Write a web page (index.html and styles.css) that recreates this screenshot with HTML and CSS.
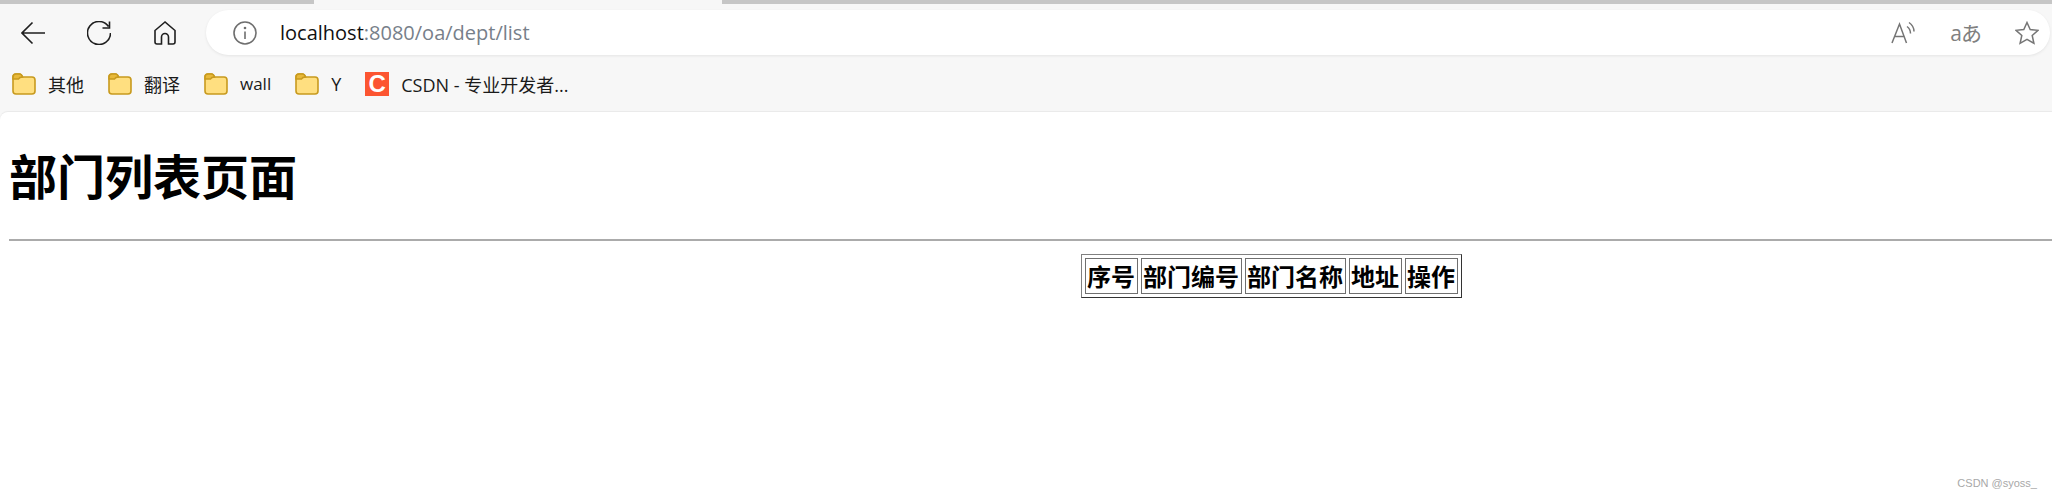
FILE: index.html
```html
<!DOCTYPE html>
<html lang="zh-CN">
<head>
<meta charset="UTF-8">
<meta name="viewport" content="width=device-width, initial-scale=1.0">
<link rel="stylesheet" href="styles.css">
<title>部门列表页面</title>
</head>

<body>

  <!-- browser chrome -->
  <div class="tab-strip">
    <div class="tab-rest tab-left"></div>
    <div class="tab-active"></div>
    <div class="tab-rest tab-right"></div>
  </div>

  <div class="toolbar">
    <svg class="nav-icon" width="24" height="24" viewBox="0 0 24 24"><path d="M24 12H1M11.500 1.500L1 12l10.500 10.500"/></svg>
    <svg class="nav-icon" width="24" height="24" viewBox="0 0 24 24"><path d="M21.500 5.500A11.500 11.500 0 1 0 23.500 12M22.500 .5v6.500h-7"/></svg>
    <svg class="nav-icon" width="24" height="24" viewBox="0 0 24 24"><path d="M12 1L2 9.500V21q0 2 2 2h4.500v-7a3.500 3.500 0 0 1 7 0v7H20q2 0 2-2V9.500z"/></svg>
    <div class="address-bar">
      <svg class="info-icon" width="24" height="24" viewBox="0 0 24 24"><circle cx="12" cy="12" r="11"/><path d="M12 10.500V18"/><circle class="dot" cx="12" cy="7" r="1.300"/></svg>
      <div class="url">localhost<span class="url-path">:8080/oa/dept/list</span></div>
      <div class="address-actions">
        <svg class="action-icon" width="24" height="23" viewBox="0 0 24 23"><path d="M1 22L8.500 3 15.500 22M3.500 15.500h10M16 5.500q3.500 2.500 3.500 7M18 1.500q5 3.500 5 9"/></svg>
        <span class="translate">aあ</span>
        <svg class="action-icon" width="24" height="24" viewBox="0 0 24 24"><path d="M12 1.500l3.200 7 7.800 .8-5.800 5.200 1.700 7.800-6.900-4-6.900 4 1.700-7.800L1 9.300l7.800-.8z"/></svg>
      </div>
    </div>
  </div>

  <div class="bookmarks">
    <div class="bookmark"><svg class="folder" width="24" height="22" viewBox="0 0 24 22"><path d="M1 6V4q0-3 3-3h3.500q2 0 3 3h9.500q3 0 3 3v11q0 3-3 3H4q-3 0-3-3z"/><path class="folder-tab" d="M1 6V4q0-3 3-3h3.500q2 0 3 3-3 0-4 2z"/></svg>其他</div>
    <div class="bookmark"><svg class="folder" width="24" height="22" viewBox="0 0 24 22"><path d="M1 6V4q0-3 3-3h3.500q2 0 3 3h9.500q3 0 3 3v11q0 3-3 3H4q-3 0-3-3z"/><path class="folder-tab" d="M1 6V4q0-3 3-3h3.500q2 0 3 3-3 0-4 2z"/></svg>翻译</div>
    <div class="bookmark"><svg class="folder" width="24" height="22" viewBox="0 0 24 22"><path d="M1 6V4q0-3 3-3h3.500q2 0 3 3h9.500q3 0 3 3v11q0 3-3 3H4q-3 0-3-3z"/><path class="folder-tab" d="M1 6V4q0-3 3-3h3.500q2 0 3 3-3 0-4 2z"/></svg><span class="latin">wall</span></div>
    <div class="bookmark"><svg class="folder" width="24" height="22" viewBox="0 0 24 22"><path d="M1 6V4q0-3 3-3h3.500q2 0 3 3h9.500q3 0 3 3v11q0 3-3 3H4q-3 0-3-3z"/><path class="folder-tab" d="M1 6V4q0-3 3-3h3.500q2 0 3 3-3 0-4 2z"/></svg>Y</div>
    <div class="bookmark"><span class="csdn-logo">C</span>CSDN - 专业开发者...</div>
  </div>

  <!-- page content -->
  <main class="page">
    <h1>部门列表页面</h1>
    <hr>
    <table class="dept-table">
      <tr>
        <th>序号</th>
        <th>部门编号</th>
        <th>部门名称</th>
        <th>地址</th>
        <th>操作</th>
      </tr>
    </table>
    <div class="watermark">CSDN @syoss_</div>
  </main>

</body>
</html>
```

FILE: styles.css
```css
* {
  box-sizing: border-box;
}
body {
  margin: 0;
  height: 499px;
  overflow: hidden;
  background-color: #f7f7f7;
  font-family: "Open Sans", "Noto Sans CJK SC", sans-serif;
}

/* tab strip along the top */
.tab-strip {
  display: flex;
  height: 4px;
}
.tab-rest {
  background-color: #c6c6c6;
}
.tab-left {
  width: 314px;
}
.tab-active {
  width: 408px;
}
.tab-right {
  flex: 1;
}

/* toolbar */
.toolbar {
  display: flex;
  align-items: center;
  height: 51px;
  padding: 6px 2px 0 21px;
}
.nav-icon {
  margin-right: 42px;
  fill: none;
  stroke: #1f1f1f;
  stroke-width: 1.6;
}
.nav-icon:nth-of-type(3) {
  margin-right: 29px;
}
.address-bar {
  flex: 1;
  display: flex;
  align-items: center;
  height: 45px;
  padding-left: 27px;
  background-color: #fff;
  border-radius: 23px;
  box-shadow: 0 1px 3px rgba(0, 0, 0, 0.08);
}
.info-icon {
  fill: none;
  stroke: #6e6e6e;
  stroke-width: 1.6;
}
.info-icon .dot {
  fill: #6e6e6e;
  stroke: none;
}
.url {
  margin-left: 23px;
  font-size: 20px;
  color: #111;
}
.url-path {
  color: #77808a;
}
.address-actions {
  margin-left: auto;
  display: flex;
  align-items: center;
  padding-right: 11px;
}
.action-icon {
  fill: none;
  stroke: #757575;
  stroke-width: 1.5;
}
.translate {
  margin: 0 34px 0 35px;
  font-size: 21px;
  line-height: 24px;
  letter-spacing: -1px;
  color: #808080;
}

/* bookmarks bar */
.bookmarks {
  display: flex;
  align-items: center;
  gap: 24px;
  height: 57px;
  padding-left: 12px;
  font-size: 18px;
  color: #1a1a1a;
}
.bookmark {
  display: flex;
  align-items: center;
  gap: 12px;
}
.latin {
  font-size: 17px;
}
.folder {
  fill: #ffdf80;
  stroke: #c89a1e;
  stroke-width: 1.6;
}
.folder-tab {
  fill: #e8b93a;
}
.csdn-logo {
  width: 24px;
  height: 24px;
  background-color: #fc5531;
  color: #fff;
  font-family: "Liberation Sans", sans-serif;
  font-size: 24px;
  font-weight: 700;
  line-height: 24px;
  text-align: center;
}

/* page */
.page {
  position: relative;
  height: 387px;
  padding: 1px 0 0 9px;
  background-color: #fff;
  border-top-left-radius: 8px;
  box-shadow: 0 -1px 1px rgba(0, 0, 0, 0.06);
  font-family: "Noto Sans CJK SC", sans-serif;
  color: #000;
}
h1 {
  margin: 26px 0 0;
  font-size: 48px;
  line-height: 70px;
  font-weight: 700;
}
hr {
  margin: 30px 0 0;
  height: 2px;
  border: 0;
  background-color: #ababab;
}
.dept-table {
  margin: 13px 0 0 1072px;
  border: 1px solid;
  border-color: #808080 #333 #333 #808080;
  border-spacing: 3px;
}
.dept-table th {
  padding: 1px 2px 1px 1px;
  border: 1px solid #6f6f6f;
  font-size: 24px;
  line-height: 32px;
  font-weight: 700;
}
.watermark {
  position: absolute;
  right: 15px;
  bottom: 10px;
  font-family: "Liberation Sans", sans-serif;
  font-size: 11px;
  color: #a8a8a8;
}
```
